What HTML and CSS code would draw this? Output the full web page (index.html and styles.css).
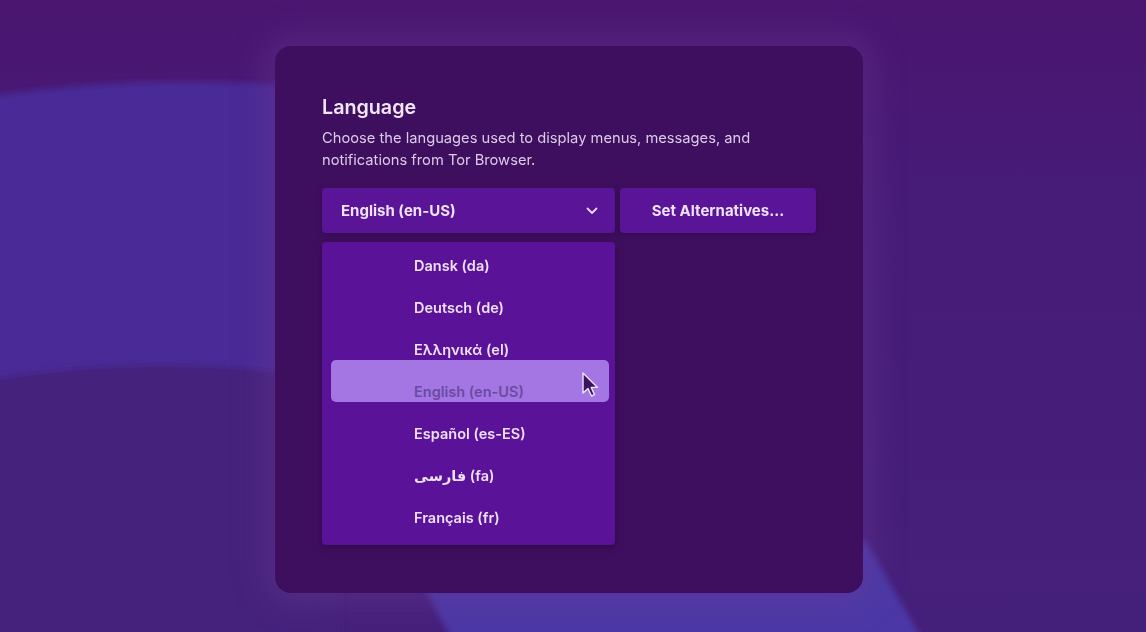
FILE: index.html
```html
<!DOCTYPE html>
<html lang="en">
<head>
    <meta charset="UTF-8">
    <meta name="viewport" content="width=device-width, initial-scale=1.0">
    <title>Language</title>
    <link rel="stylesheet" href="styles.css">
</head>
<body>
    <svg class="backdrop" viewBox="0 0 1146 632" preserveAspectRatio="none" aria-hidden="true">
        <defs>
            <linearGradient id="base" x1="0" y1="0" x2="0" y2="1">
                <stop offset="0" stop-color="#4a1670"/>
                <stop offset="0.3" stop-color="#471b78"/>
                <stop offset="1" stop-color="#45207b"/>
            </linearGradient>
            <filter id="soft" x="-10%" y="-10%" width="120%" height="120%">
                <feGaussianBlur stdDeviation="3"/>
            </filter>
        </defs>
        <rect width="1146" height="632" fill="url(#base)"/>
        <g filter="url(#soft)">
            <path d="M-20 98 Q150 70 340 90 L340 380 Q150 350 -20 382 Z" fill="#4a2996"/>
            <path d="M-20 382 Q150 350 340 380 L340 650 L-20 650 Z" fill="#45217c"/>
            <path d="M425 590 L865 540 L928 650 L458 650 Z" fill="#4c38a6"/>
        </g>
    </svg>

    <div class="stage">
        <div class="card">
            <h2 class="title">Language</h2>
            <p class="desc">Choose the languages used to display menus, messages, and notifications from Tor Browser.</p>

            <div class="controls">
                <div class="select">
                    <span>English (en-US)</span>
                    <svg class="chevron" width="12" height="8" viewBox="0 0 12 8">
                        <polyline points="1.5,1.5 6,6 10.5,1.5" fill="none" stroke="#e6d6f2" stroke-width="1.8" stroke-linecap="round" stroke-linejoin="round"/>
                    </svg>
                </div>
                <button class="btn">Set Alternatives...</button>
            </div>

            <ul class="menu">
                <li>Dansk (da)</li>
                <li>Deutsch (de)</li>
                <li>Ελληνικά (el)</li>
                <li class="hover">
                    <span>English (en-US)</span>
                    <svg class="cursor" width="18" height="26" viewBox="0 0 18 26">
                        <path d="M2 1 L2 21 L7 16.5 L10.5 24 L13.5 22.6 L10.2 15.4 L16.5 15.4 Z" fill="#3b1460" stroke="#efe4fb" stroke-width="1.4" stroke-linejoin="round"/>
                    </svg>
                </li>
                <li>Español (es-ES)</li>
                <li>فارسی (fa)</li>
                <li>Français (fr)</li>
            </ul>
        </div>
    </div>
</body>
</html>
```

FILE: styles.css
```css
html, body {
    margin: 0;
    padding: 0;
    height: 632px;
    overflow: hidden;
}
body {
    font-family: Inter, "Noto Sans", "DejaVu Sans", sans-serif;
    color: #efe2f7;
    background-color: #46197a;
}
.backdrop {
    position: fixed;
    inset: 0;
    width: 100%;
    height: 100%;
    z-index: -1;
}
.stage {
    padding: 46px 0 0 275px;
}
.card {
    width: 588px;
    height: 547px;
    box-sizing: border-box;
    padding: 49px 47px 0 47px;
    background-color: #3f0f5f;
    border-radius: 16px;
    box-shadow: 0 0 30px 12px rgba(110, 60, 150, 0.35);
}
.title {
    margin: 0;
    font-size: 19.7px;
    line-height: 24px;
    font-weight: 600;
    color: #f1e6f8;
}
.desc {
    margin: 8px 0 0 0;
    font-size: 14.7px;
    line-height: 22px;
    color: #dccbe8;
    width: 450px;
}
.controls {
    display: flex;
    gap: 5px;
    margin-top: 17px;
}
.select {
    width: 293px;
    height: 45px;
    box-sizing: border-box;
    padding: 0 17px 0 19px;
    display: flex;
    align-items: center;
    justify-content: space-between;
    background-color: #5a1497;
    border-radius: 4px;
    font-size: 15px;
    font-weight: 700;
    box-shadow: 0 2px 6px rgba(20, 0, 40, 0.3);
}
.btn {
    width: 196px;
    height: 45px;
    border: none;
    border-radius: 4px;
    background-color: #5a1497;
    color: #efe2f7;
    font-family: inherit;
    font-size: 15px;
    font-weight: 700;
    box-shadow: 0 2px 6px rgba(20, 0, 40, 0.3);
}
.menu {
    list-style: none;
    margin: 9px 0 0 0;
    padding: 3px 0 6px 0;
    width: 293px;
    box-sizing: border-box;
    background-color: #5a1398;
    border-radius: 4px;
    box-shadow: 0 3px 8px rgba(20, 0, 40, 0.35);
}
.menu li {
    position: relative;
    height: 42px;
    line-height: 42px;
    padding-left: 92px;
    font-size: 14.5px;
    font-weight: 600;
    color: #eee0f6;
}
.menu li.hover {
    color: #6b4aa2;
}
.menu li.hover::before {
    content: "";
    position: absolute;
    left: 9px;
    right: 6px;
    top: -11px;
    height: 42px;
    background-color: #a476e4;
    border-radius: 5px;
}
.menu li.hover span {
    position: relative;
}
.cursor {
    position: absolute;
    left: 259px;
    top: 1px;
}
```
